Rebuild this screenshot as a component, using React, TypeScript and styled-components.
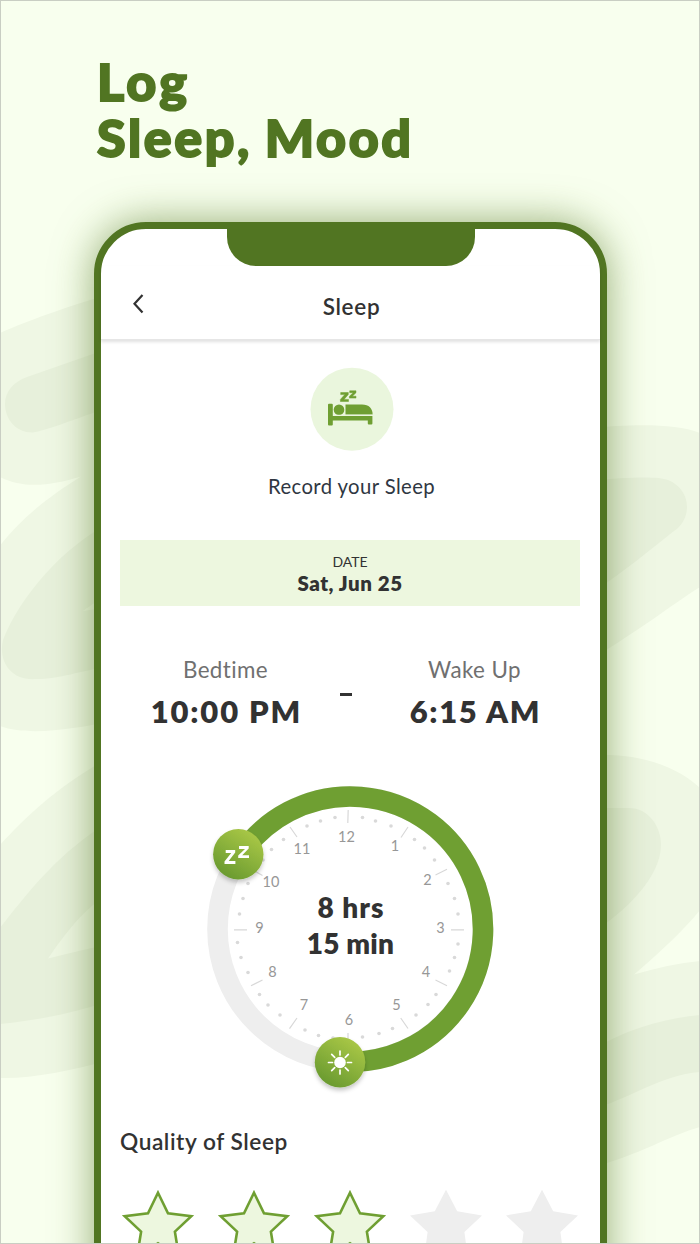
import React from 'react';
import styled, { createGlobalStyle } from 'styled-components';

const GlobalStyle = createGlobalStyle`
  *, *::before, *::after { box-sizing: border-box; }
  body { margin: 0; background: #f8ffee; font-family: Lato, "Open Sans", sans-serif; font-variant-ligatures: none; color: #323232; }
`;

const Page = styled.main`
  position: relative;
  width: 700px;
  height: 1244px;
  overflow: hidden;
  padding: 53px 93.5px 0 93.5px;
  background: #f8ffee;
  &::after {
    content: '';
    position: absolute;
    inset: 0;
    border: 1px solid #c9cec3;
    pointer-events: none;
  }
`;

const Backdrop = styled.svg`
  position: absolute;
  inset: 0;
`;

const Headline = styled.h1`
  position: relative;
  margin: 0 0 0 3.5px;
  height: 169px;
  font-size: 52px;
  line-height: 56px;
  font-weight: 900;
  color: #517522;
  -webkit-text-stroke: 2px #517522;
`;

const Line = styled.span<{ $track: number }>`
  display: block;
  letter-spacing: ${p => p.$track}px;
  word-spacing: -2px;
  white-space: nowrap;
`;

const Phone = styled.section`
  position: relative;
  width: 513px;
  height: 1100px;
  border: 7px solid #517522;
  border-radius: 52px;
  background: #fff;
  box-shadow: 0 0 40px rgba(81, 117, 34, 0.6);
`;

const Notch = styled.div`
  width: 248px;
  height: 36.5px;
  margin: 0 0 0 126.5px;
  border-radius: 0 0 29px 29px;
  background: #517522;
`;

const TopBar = styled.header`
  display: grid;
  grid-template-columns: 60px 1fr 60px;
  height: 74.5px;
  border-bottom: 1px solid #e6e6e6;
  box-shadow: 0 2px 3px rgba(0, 0, 0, 0.12);
`;

const BackButton = styled.button`
  display: flex;
  padding: 27px 0 0 31px;
  border: 0;
  background: none;
`;

const Title = styled.h2`
  margin: 28px 0 0 3px;
  text-align: center;
  font-size: 22.5px;
  line-height: 26px;
  font-weight: 600;
  letter-spacing: 0.7px;
`;

const Intro = styled.div`
  display: flex;
  flex-direction: column;
  align-items: center;
  padding: 26.5px 0 0 3px;
`;

const IntroText = styled.p`
  margin: 23px 0 0;
  font-size: 20.3px;
  line-height: 24px;
  letter-spacing: 0.4px;
  color: #2f3742;
`;

const DateBox = styled.div`
  display: flex;
  flex-direction: column;
  align-items: center;
  width: 460px;
  height: 66px;
  margin: 42.5px 0 0 19.5px;
  padding-top: 13px;
  background: #edf7df;
`;

const DateLabel = styled.span`
  font-size: 14px;
  line-height: 18px;
`;

const DateValue = styled.strong`
  font-size: 20.5px;
  line-height: 24px;
  font-weight: 800;
  letter-spacing: 0.55px;
`;

const Times = styled.div`
  display: grid;
  grid-template-columns: 212px 29px 228px;
  margin: 49px 0 0 19px;
  height: 125px;
`;

const Time = styled.div`
  display: flex;
  flex-direction: column;
  align-items: center;
  white-space: nowrap;
`;

const TimeLabel = styled.span`
  font-size: 22.4px;
  line-height: 30px;
  letter-spacing: 0.4px;
  color: #707070;
`;

const TimeValue = styled.strong<{ $track: number }>`
  margin: 7.5px -1.8px 0 0;
  font-size: 31px;
  line-height: 36px;
  font-weight: 800;
  letter-spacing: ${p => p.$track}px;
`;

const Dash = styled.span`
  width: 12px;
  height: 3px;
  margin: 38px 0 0 8px;
  background: #323232;
`;

const Dial = styled.svg`
  display: block;
  margin: 0 0 0 89.5px;
  overflow: visible;
`;

const Section = styled.h3`
  margin: 27px 0 0 19.5px;
  font-size: 22.7px;
  line-height: 30px;
  font-weight: 600;
  letter-spacing: 0.55px;
`;

const Stars = styled.div`
  display: flex;
  gap: 22px;
  margin: 32px 0 0 20.5px;
`;

const hours: [string, number, number][] = [
  ['12', 346.5, 841.5], ['1', 395, 850.5], ['2', 427.5, 884.5], ['3', 440.5, 933.3],
  ['4', 426, 977], ['5', 396.5, 1009.5], ['6', 349, 1024.5], ['7', 304, 1009.5],
  ['8', 272.5, 977.3], ['9', 259.5, 933.3], ['10', 271, 887.3], ['11', 302, 853.5],
];

const ticks = [
  'M348.2 810L347.8 823', 'M290 827L297 837', 'M251 869L262.5 875.5', 'M234 929.8H247',
  'M251 985.7L262.5 980', 'M289.5 1028.7L297 1018', 'M348 1033V1045', 'M408 1028.5L400.7 1018',
  'M447 985.7L435.5 980', 'M451 929.8H464', 'M447 869.3L435.5 875', 'M408 827L401 837.5',
].join('');

const dots = [
  [335, 817.5], [320.5, 821], [307, 826], [283.5, 839.5], [271.5, 849.5], [263, 860],
  [248, 883.5], [243, 898.5], [239.5, 914], [362.5, 817.5], [375.5, 821], [391, 826],
  [414.5, 839.5], [424.5, 848], [434.5, 860], [448, 883.5], [454.5, 898.5], [458, 914],
  [237.5, 942.5], [241, 957.5], [248, 972.5], [259.5, 994.5], [268, 1005], [280, 1015],
  [305, 1030], [318.5, 1035.5], [333, 1038], [458, 944], [454.5, 957.5], [449.5, 971],
  [436, 994.5], [428, 1004.5], [416, 1015], [392.5, 1028.5], [379, 1033.5], [362.5, 1037],
];

const Waves = () => (
  <Backdrop width="700" height="1244" viewBox="0 0 700 1244">
    <g fill="#eff7e4">
      <path d="M0 333C30 320 60 309 110 294V722C75 728 30 737 0 726V545.5C20 520 45 499 81 476.5C50 486 24 489 0 477Z" />
      <path d="M0 845C28 814 60 785 110 757V1060C70 1071 30 1079 0 1078Z" />
      <path d="M590 428C625 425 673 422 700 433V587C670 606 640 630 590 660Z" />
      <path d="M590 755C650 752 684 773 700 788V910C683 931 660 952 634 974.500C656 968 679 963 700 961V1127C670 1135 640 1155 590 1168Z" />
    </g>
    <g fill="#e7f0db">
      <path d="M110 348L27 377C13 382 5 392 5 404C5 420 17 433 33 432.500C45 431 75 419 110 407Z" />
      <path d="M110 523C65 545 20 596 3 640C-2 660 10 681 36 679C60 679 80 671 110 666V607L83 611C91 605 99 600 110 593Z" />
      <path d="M0 928C33 886 60 852 110 821V893C85 907 65 934 48 958.500C70 953 90 948 110 944V1001C73 1013 40 1020 0 1024Z" />
      <path d="M590 480.500C630 477 658 476 668 480C680 485 687 495 687 507C687 518 681 527 672 532.500C650 550 625 571 590 594Z" />
      <path d="M590 808H629C648 808 661 826 661 845C661 876 627 911 590 934Z" />
      <path d="M590 1051C625 1030 660 1019 700 1015V1072C660 1075 630 1099 590 1110Z" />
    </g>
  </Backdrop>
);

const BedBadge = () => (
  <svg width="84" height="84" viewBox="310 366.500 84 84">
    <circle cx="352" cy="408.700" r="41.500" fill="#eaf6dd" />
    <g fill="#6f9f32">
      <path d="M328 404.200Q328 403.200 329 403.200H331.800Q332.800 403.200 332.800 404.200V415.400H372.400V423Q372.400 424 371.400 424H368.800Q367.800 424 367.800 423V420H332.800V424Q332.800 425 331.800 425H329Q328 425 328 424Z" />
      <circle cx="339" cy="409.200" r="5.300" />
      <path d="M345.500 404H362C369 404 372.600 408 372.600 414H345.500Z" />
      <path d="M340.700 392H348.300V394L344 398.900H348.500V401H340.400V398.900L344.800 394.100H340.700ZM349.700 390.300H356V392.200L352.400 395.700H356V397.600H349.400V395.800L353.200 392.200H349.700Z" stroke="#6f9f32" strokeWidth="0.500" />
    </g>
    <path d="M333 414.800H372.400" stroke="#eaf6dd" strokeWidth="1" />
  </svg>
);

const SleepDial = () => (
  <Dial width="320" height="320" viewBox="190 780 320 320">
    <defs>
      <linearGradient id="knob" x1="0.75" y1="0.1" x2="0.25" y2="0.9">
        <stop offset="0" stopColor="#a6c545" />
        <stop offset="1" stopColor="#6c9c31" />
      </linearGradient>
      <filter id="lift" x="-30%" y="-30%" width="160%" height="170%">
        <feDropShadow dx="0" dy="3" stdDeviation="2" floodColor="#000" floodOpacity="0.22" />
      </filter>
    </defs>
    <circle cx="350.200" cy="929" r="132.700" fill="none" stroke="#eeeeee" strokeWidth="20.600" />
    <path d="M241 854A132.700 132.700 0 1 1 340 1061.500" fill="none" stroke="#6f9f32" strokeWidth="20.600" />
    <path d={ticks} stroke="#d8d8d8" strokeWidth="1.200" />
    {dots.map(([x, y]) => <circle key={`${x}-${y}`} cx={x} cy={y} r="1.800" fill="#d9d9d9" />)}
    <g fill="#979797" fontSize="14.500" textAnchor="middle">
      {hours.map(([label, x, y]) => <text key={label} x={x} y={y}>{label}</text>)}
    </g>
    <g fill="#323232" fontSize="28" fontWeight="800" textAnchor="middle">
      <text x="351" y="917.500" letterSpacing="1">8 hrs</text>
      <text x="350.500" y="953.500" letterSpacing="0.200">15 min</text>
    </g>
    <circle cx="238.300" cy="854.300" r="25.200" fill="url(#knob)" filter="url(#lift)" />
    <circle cx="340" cy="1062.200" r="25.200" fill="url(#knob)" filter="url(#lift)" />
    <path d="M225.700 850H235.200V852.400L228.700 861H235.400V864H224.500V861.500L231.200 853H225.700ZM239 846H248.700V848.500L242.200 855.200H249V858H238.200V855.500L245 848.900H239Z" fill="#fff" />
    <circle cx="340" cy="1062.500" r="5.800" fill="#fff" />
    <path d="M340 1051V1055M340 1070V1074M328.500 1062.500H332.500M347.500 1062.500H351.500M331.700 1054.300L334.700 1057.300M345.300 1067.700L348.300 1070.700M331.700 1070.700L334.700 1067.700M345.300 1057.300L348.300 1054.300" stroke="#fff" strokeWidth="1.700" strokeLinecap="round" />
  </Dial>
);

const Star = ({ filled }: { filled: boolean }) => (
  <svg width="74" height="70" viewBox="0 0 74 70">
    {filled ? (
      <path d="M37 3.800L47 24.200L70.300 27.200L53.900 42.600L58 68L37 54.300L16 68L20.100 42.600L3.700 27.200L27 24.200Z" fill="#edf7df" stroke="#6f9f32" strokeWidth="2.600" />
    ) : (
      <path d="M37 0.800L48.200 22.300L73 26.400L55.400 43L59 70H15L18.600 43L1 26.400L25.800 22.300Z" fill="#eeeeee" />
    )}
  </svg>
);

export default function App() {
  return (
    <Page>
      <GlobalStyle />
      <Waves />
      <Headline>
        <Line $track={3.2}>Log</Line>
        <Line $track={2.6}>Sleep, Mood</Line>
      </Headline>
      <Phone>
        <Notch />
        <TopBar>
          <BackButton aria-label="Back">
            <svg width="13" height="22" viewBox="0 0 13 22" fill="none" stroke="#323232" strokeWidth="2.200">
              <path d="M10.500 2L2.500 10.800L10.500 19.500" />
            </svg>
          </BackButton>
          <Title>Sleep</Title>
        </TopBar>
        <Intro>
          <BedBadge />
          <IntroText>Record your Sleep</IntroText>
        </Intro>
        <DateBox>
          <DateLabel>DATE</DateLabel>
          <DateValue>Sat, Jun 25</DateValue>
        </DateBox>
        <Times>
          <Time>
            <TimeLabel>Bedtime</TimeLabel>
            <TimeValue $track={1.8}>10:00 PM</TimeValue>
          </Time>
          <Dash />
          <Time>
            <TimeLabel>Wake Up</TimeLabel>
            <TimeValue $track={1.6}>6:15 AM</TimeValue>
          </Time>
        </Times>
        <SleepDial />
        <Section>Quality of Sleep</Section>
        <Stars>
          {[1, 2, 3, 4, 5].map(n => <Star key={n} filled={n <= 3} />)}
        </Stars>
      </Phone>
    </Page>
  );
}
